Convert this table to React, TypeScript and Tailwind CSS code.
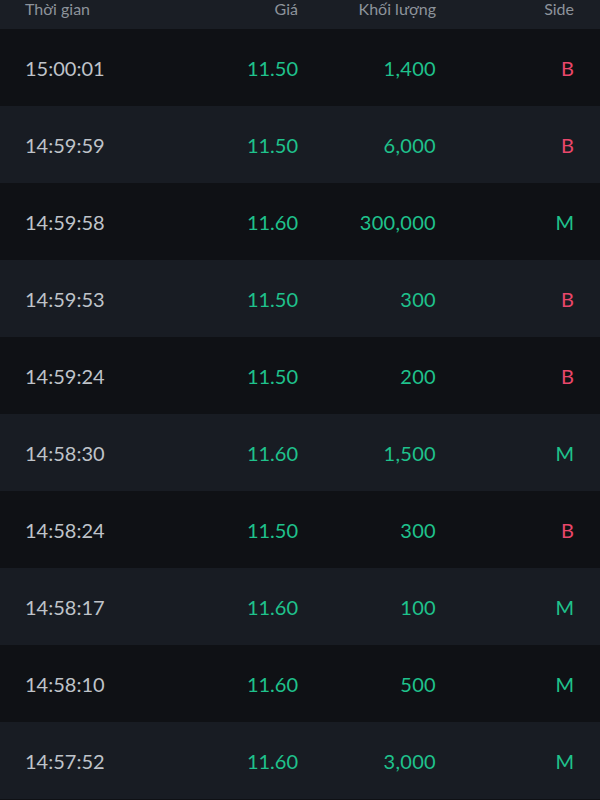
import React from "react";

const rows: [string, string, string, "B" | "M"][] = [
  ["15:00:01", "11.50", "1,400", "B"],
  ["14:59:59", "11.50", "6,000", "B"],
  ["14:59:58", "11.60", "300,000", "M"],
  ["14:59:53", "11.50", "300", "B"],
  ["14:59:24", "11.50", "200", "B"],
  ["14:58:30", "11.60", "1,500", "M"],
  ["14:58:24", "11.50", "300", "B"],
  ["14:58:17", "11.60", "100", "M"],
  ["14:58:10", "11.60", "500", "M"],
  ["14:57:52", "11.60", "3,000", "M"],
];

export default function App() {
  return (
    <div
      className="w-[600px] h-[800px] bg-[#0f1115] overflow-hidden"
      style={{ fontFamily: "Lato, 'Noto Sans', sans-serif" }}
    >
      <div className="grid grid-cols-[1fr_138px_138px_138px] pl-[25px] pr-[26px] h-[29px] bg-[#1a1e25] text-[16px] text-[#8d939b] leading-none pt-[1px]">
        <div>Thời gian</div>
        <div className="text-right">Giá</div>
        <div className="text-right">Khối lượng</div>
        <div className="text-right">Side</div>
      </div>
      {rows.map((r, i) => (
        <div
          key={i}
          className={`grid grid-cols-[1fr_138px_138px_138px] items-center pl-[25px] pr-[26px] h-[77px] text-[20px] ${
            i % 2 === 0 ? "bg-[#0f1115]" : "bg-[#181c23]"
          }`}
        >
          <div className="text-[#bfc3c9]">{r[0]}</div>
          <div className="text-right text-[#1fc28c]">{r[1]}</div>
          <div className="text-right text-[#1fc28c] tracking-[0.3px]">{r[2]}</div>
          <div
            className={`text-right ${
              r[3] === "B" ? "text-[#e9476b]" : "text-[#1fc28c]"
            }`}
          >
            {r[3]}
          </div>
        </div>
      ))}
    </div>
  );
}
